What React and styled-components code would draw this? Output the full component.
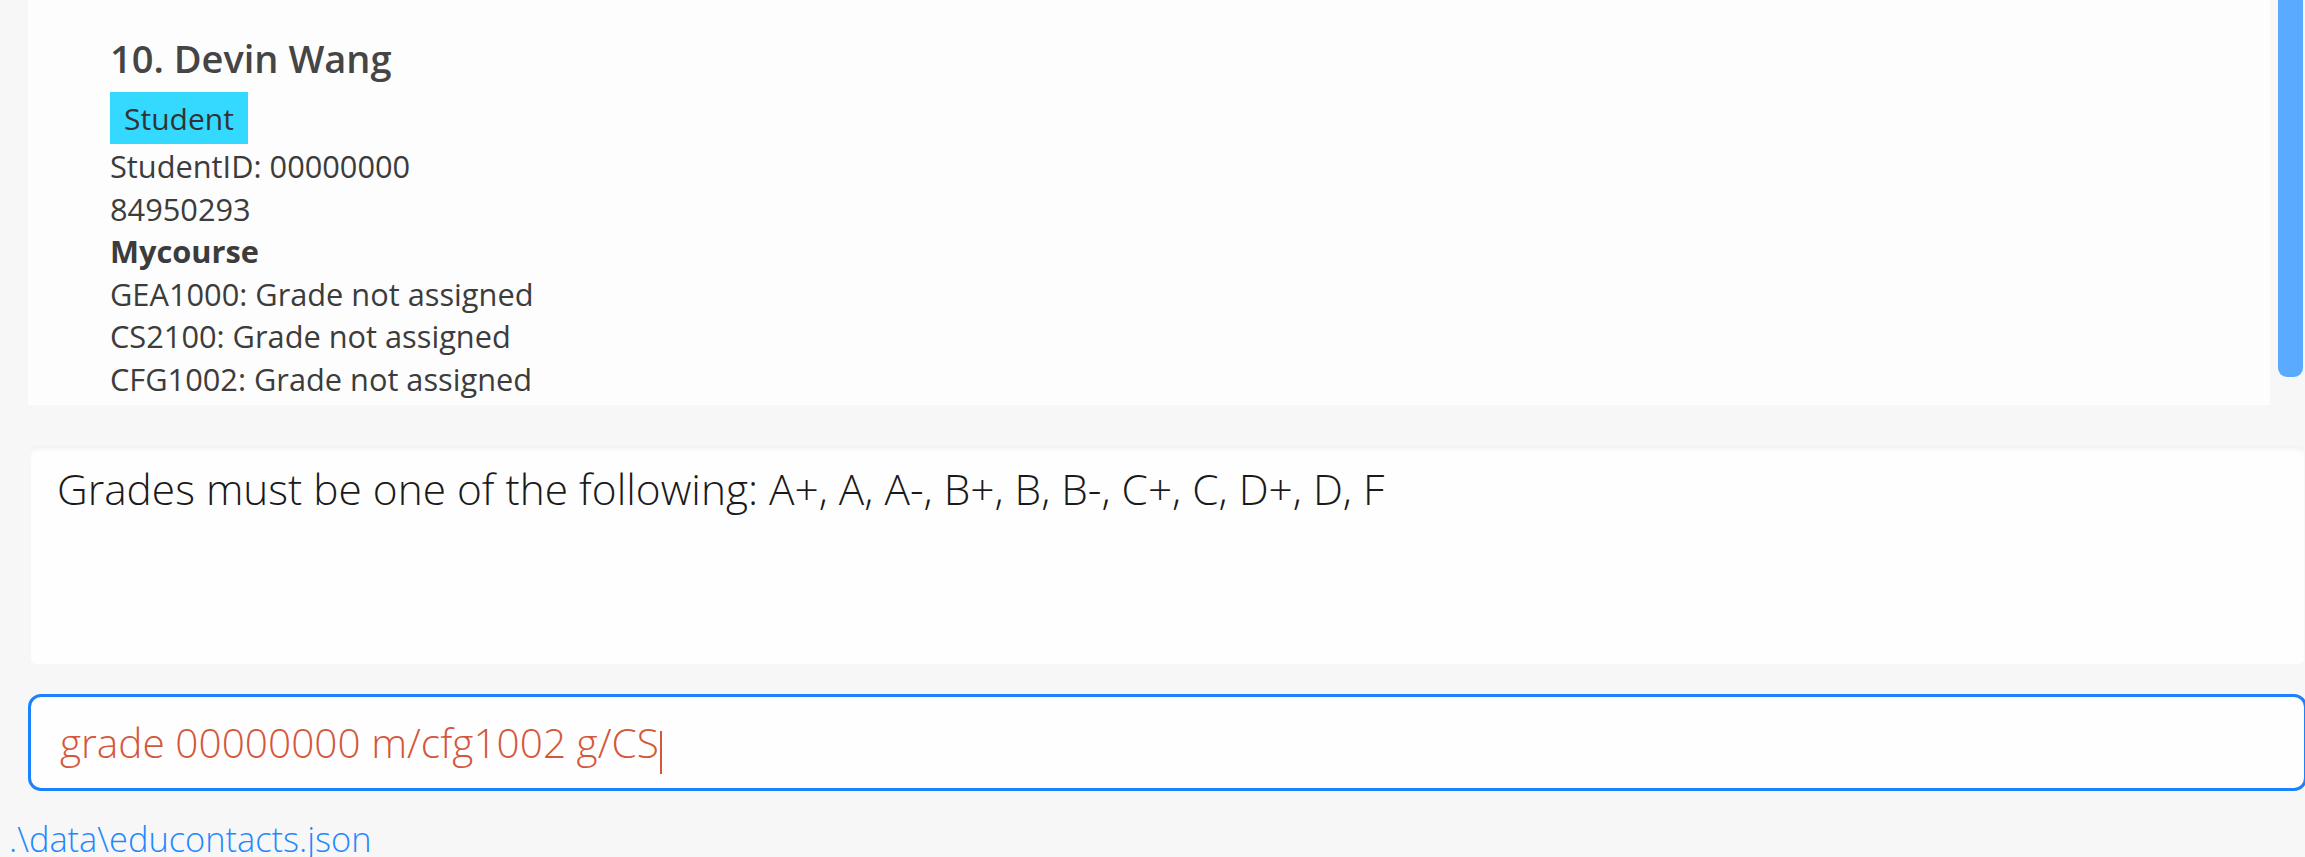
import React from "react";
import styled, { createGlobalStyle } from "styled-components";

const GlobalStyle = createGlobalStyle`
  html, body {
    margin: 0;
    padding: 0;
    background: #f7f7f7;
    overflow: hidden;
  }
  * { box-sizing: border-box; }
`;

const Page = styled.div`
  width: 2305px;
  height: 857px;
  overflow: hidden;
  background: #f7f7f7;
  display: flex;
  flex-direction: column;
  font-family: "Open Sans", "Noto Sans", sans-serif;
`;

const ListRow = styled.div`
  height: 405px;
  display: flex;
  padding-left: 28px;
  flex-shrink: 0;
`;

const Card = styled.div`
  width: 2242px;
  height: 405px;
  background: #fdfdfd;
  padding: 32px 0 0 82px;
  color: #3c3c3c;
  overflow: hidden;
`;

const ScrollTrack = styled.div`
  flex: 1;
  padding-left: 8px;
  padding-right: 2px;
`;

const ScrollThumb = styled.div`
  height: 377px;
  background: #5aabff;
  border-radius: 0 0 9px 9px;
`;

const Name = styled.div`
  font-size: 38px;
  font-weight: 600;
  color: #454545;
  line-height: 52px;
  margin-bottom: 8px;
`;

const Tag = styled.span`
  display: inline-block;
  background: #33d9ff;
  color: #333;
  font-size: 30px;
  line-height: 41px;
  padding: 5.5px 14px;
  height: 52px;
  vertical-align: top;
`;

const Details = styled.div`
  padding-top: 1px;
`;

const Line = styled.div`
  font-size: 30.75px;
  line-height: 42.6px;
  font-weight: ${(p) => (p.$bold ? 700 : 400)};
  color: #3c3c3c;
`;

const ResultBox = styled.div`
  margin: 41px 1px 0 31px;
  height: 218px;
  background: #fefefe;
  border-radius: 5px;
  box-shadow: inset 0 6px 6px -4px rgba(0, 0, 0, 0.07);
  padding: 17px 0 0 26px;
  flex-shrink: 0;
`;

const ResultText = styled.div`
  font-size: 42.4px;
  font-weight: 300;
  color: #1a1a1a;
  line-height: 52px;
  white-space: nowrap;
`;

const CommandBox = styled.div`
  margin: 30px -2px 0 28px;
  height: 97px;
  border: 3px solid #1a82ff;
  border-radius: 13px;
  background: #fefefe;
  display: flex;
  align-items: center;
  padding-left: 29px;
  flex-shrink: 0;
`;

const CommandText = styled.span`
  font-size: 40.6px;
  font-weight: 300;
  color: #d4573c;
  white-space: nowrap;
`;

const Caret = styled.span`
  display: block;
  width: 2px;
  height: 43px;
  background: #d4573c;
  margin: 19px 0 0 1px;
`;

const StatusBar = styled.div`
  padding: 24px 0 0 9px;
  font-size: 34.4px;
  font-weight: 300;
  color: #1e88ff;
  white-space: nowrap;
`;

export default function App() {
  return (
    <Page>
      <GlobalStyle />
      <ListRow>
        <Card>
          <Name>10. Devin Wang</Name>
          <Tag>Student</Tag>
          <Details>
            <Line>StudentID: 00000000</Line>
            <Line>84950293</Line>
            <Line $bold>Mycourse</Line>
            <Line>GEA1000: Grade not assigned</Line>
            <Line>CS2100: Grade not assigned</Line>
            <Line>CFG1002: Grade not assigned</Line>
          </Details>
        </Card>
        <ScrollTrack>
          <ScrollThumb />
        </ScrollTrack>
      </ListRow>
      <ResultBox>
        <ResultText>
          Grades must be one of the following: A+, A, A-, B+, B, B-, C+, C, D+, D, F
        </ResultText>
      </ResultBox>
      <CommandBox>
        <CommandText>grade 00000000 m/cfg1002 g/CS</CommandText>
        <Caret />
      </CommandBox>
      <StatusBar>.\data\educontacts.json</StatusBar>
    </Page>
  );
}
